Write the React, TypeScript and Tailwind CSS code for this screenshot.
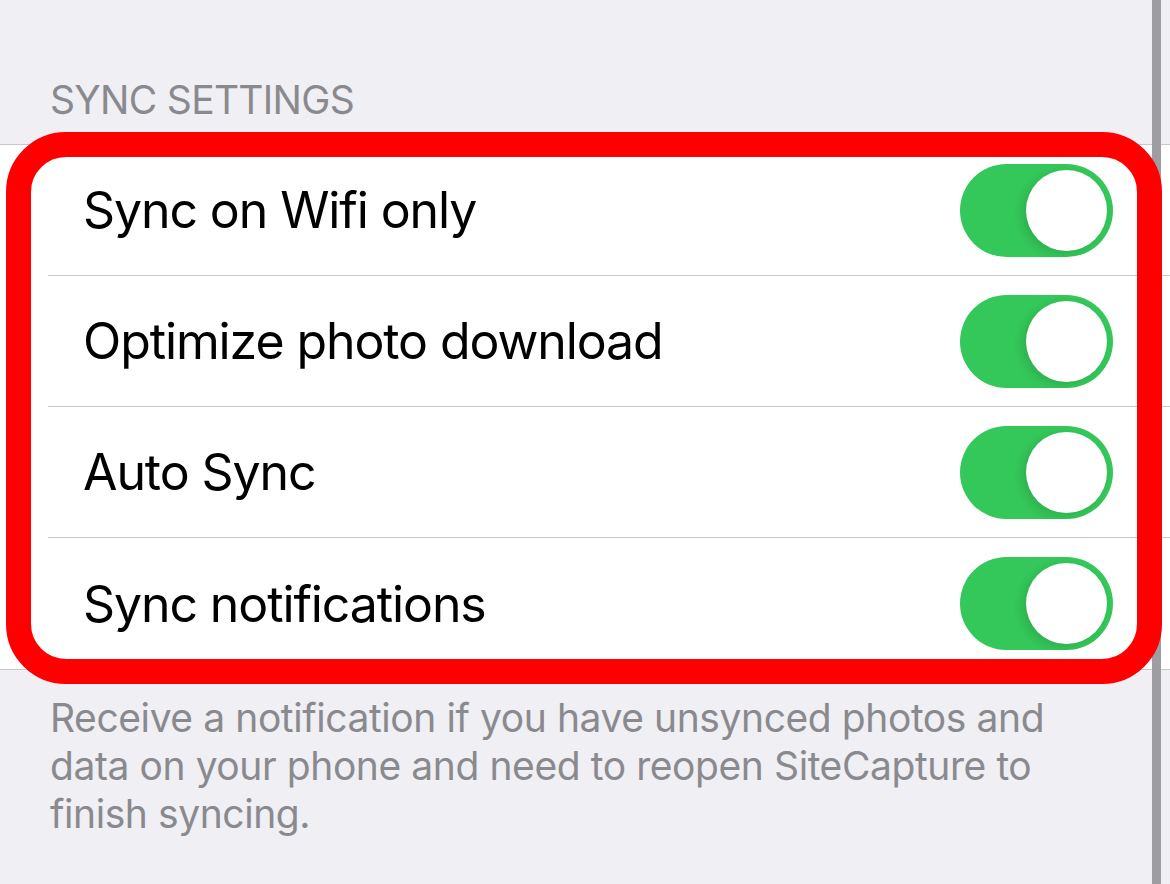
const rows = [
  "Sync on Wifi only",
  "Optimize photo download",
  "Auto Sync",
  "Sync notifications",
];

const Toggle = () => (
  <div className="relative w-[153px] h-[93px] rounded-full bg-[#34c759] shrink-0">
    <div className="absolute right-[6px] top-[6px] w-[81px] h-[81px] rounded-full bg-white shadow-[-4px_3px_10px_rgba(0,0,0,0.12)]" />
  </div>
);

export default function App() {
  return (
    <div
      className="relative w-[1170px] h-[884px] overflow-hidden bg-[#efeff4]"
      style={{ fontFamily: "Inter, 'Noto Sans', sans-serif" }}
    >
      <div className="h-[144px] flex items-end pl-[50px] pb-[25px]">
        <span className="text-[39px] leading-none text-[#8a8a8e] tracking-[-0.7px]">SYNC SETTINGS</span>
      </div>

      <div className="bg-white border-y border-[#c8c7cc]">
        {rows.map((label, i) => (
          <div key={label} className="pl-[48px]">
            <div
              className={`flex items-center justify-between h-[131px] pl-[35px] pr-[57px] ${
                i < rows.length - 1 ? "border-b border-[#c8c7cc]" : ""
              }`}
            >
              <span className="text-[50px] leading-none text-black tracking-[-1.1px]">{label}</span>
              <Toggle />
            </div>
          </div>
        ))}
      </div>

      <div className="pl-[50px] pt-[24px] text-[39px] leading-[48px] text-[#8a8a8e] tracking-[-0.42px]">
        <div>Receive a notification if you have unsynced photos and</div>
        <div>data on your phone and need to reopen SiteCapture to</div>
        <div>finish syncing.</div>
      </div>

      {/* scroll indicator */}
      <div className="absolute left-[1152px] top-0 w-[9px] h-full bg-[#9e9ea2]" />

      {/* red highlight ring drawn over the group */}
      <div className="absolute left-[6px] top-[132px] w-[1156px] h-[552px] border-[25px] border-[#ff0000] rounded-[60px]" />
    </div>
  );
}
